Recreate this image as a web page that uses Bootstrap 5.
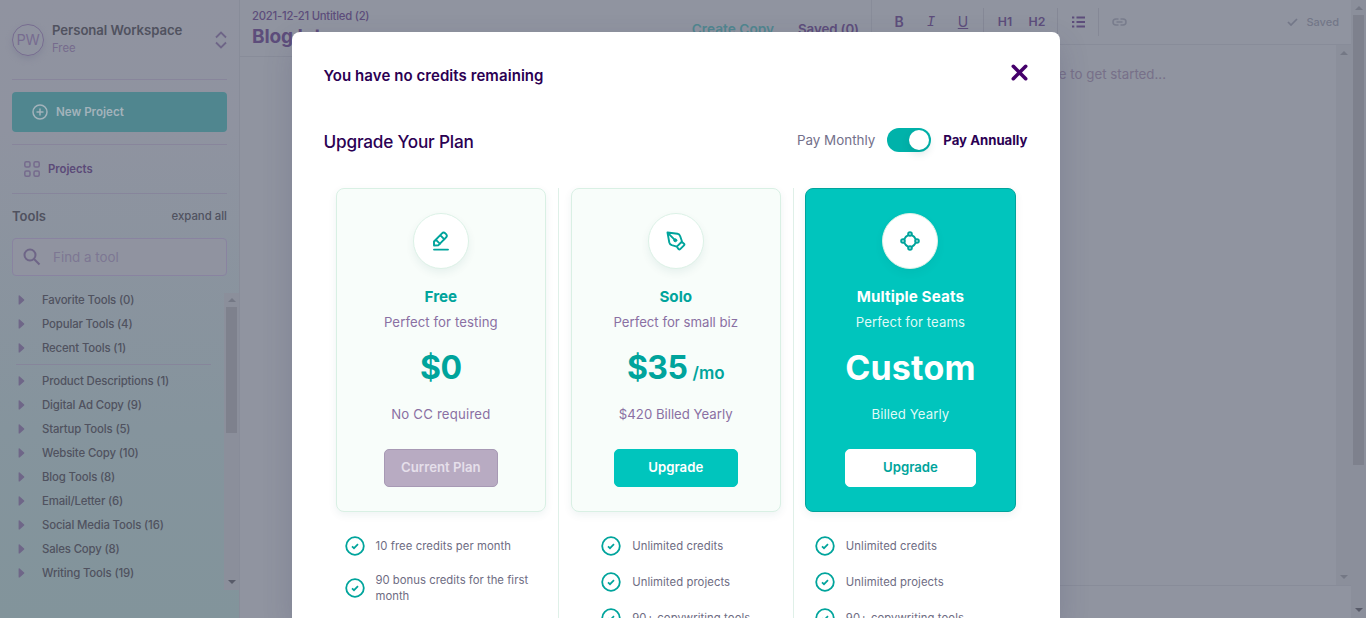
<!DOCTYPE html>
<html lang="en">
<head>
<meta charset="utf-8">
<title>Upgrade Your Plan</title>
<link href="https://cdn.jsdelivr.net/npm/bootstrap@5.3.0/dist/css/bootstrap.min.css" rel="stylesheet">
<style>
body{font-family:Inter,"Liberation Sans",sans-serif;font-size:13.2px;line-height:20px;height:618px;overflow:hidden;background:#9094a0;color:#5d4d7b}
svg{fill:none;stroke:currentColor;flex:none;display:block}
.app{height:618px}
/* sidebar */
.side{width:240px;border-right:1px solid #888c99;background:linear-gradient(#9093a0 0,#8f93a0 130px,#85949d 430px,#82949b 618px);color:#50525f}
.side-pad{padding:0 12px}
.rule{height:1px;background:#85809a;opacity:.75}
.workspace{height:79px}
.avatar{width:32px;height:32px;border:1px solid #776c90;border-radius:50%;font-size:14.5px;color:#776c90;box-shadow:0 3px 6px #858899;letter-spacing:-.2px}
.ws-name{font-size:13.2px;font-weight:600;line-height:18px;letter-spacing:-.07px;margin-top:-1px}
.tiny{font-size:11.3px}
.btn-new{height:40px;background:#50868f;color:#a3b3bb;border-radius:4px;font-weight:600;margin:12px 0;padding-left:20px}
.projects{height:48px;padding-left:12px;color:#5b4a78;font-weight:600}
.search{height:38px;border:1px solid #8983a0;border-radius:4px;background:#9093a0;color:#7d7793;font-size:13.4px}
.tool-list{height:297px}
.tool{height:24px;padding-left:18px;gap:17px;font-size:11.4px;letter-spacing:-.15px;font-weight:450}
.track{width:15px;background:#8b8f9b;color:#777b88}
.thumb{width:11px;background:#7e818d}
.arrow-up{border:4px solid transparent;border-top:0;border-bottom-color:#747885;width:8px}
.arrow-down{border:4px solid transparent;border-bottom:0;border-top-color:#747885;width:8px}
.dark-arrow{border-top-color:#585b69}
/* editor */
.doc-head{width:632px;height:57px;border-right:1px solid #888c99;border-bottom:1px solid #888c99;padding:6px 12px 0}
.doc-title{font-size:19px;font-weight:700;line-height:22px;letter-spacing:-.1px}
.tools-bar{height:45px;border-bottom:1px solid #888c99}
.fmt{width:32px;font-size:14px;font-weight:600;line-height:20px}
.sep{width:1px;height:28px;background:#858896}
.blank-note{padding:19px 170px 0 0;color:#777089;font-size:13.3px}
.foot{height:33px;border-top:1px solid #888c99}
/* dialog */
.upsell{position:absolute;left:292px;top:32px;width:768px;height:586px;overflow:hidden;background:#fff;border-radius:8px 8px 0 0;padding:0 32.500px 0 31.500px;box-shadow:0 12px 30px rgba(60,60,100,.2);color:#2b0053}
.upsell-head{height:86px}
.upsell-head h1{font-size:15px;font-weight:600;letter-spacing:.07px;margin:2px 0 0}
.bill-row{height:44px}
.bill-row h2{font-size:17.2px;font-weight:500;letter-spacing:-.2px;margin:0}
.switch-pill{width:44px;height:24px;border-radius:12px;background:#00b2aa;padding:2px}
.knob{width:20px;height:20px;border-radius:50%;background:#fff;box-shadow:0 4px 8px rgba(0,80,80,.15)}
.plans{margin-top:26px;display:grid;grid-template-columns:repeat(3,1fr)}
.plan-col{height:430px;padding:0 12px}
.plan-col + .plan-col{border-left:1px solid #dff0e8}
.plan{height:324px;border:1px solid #d9f0e4;border-radius:8px;background:#f8fdfa;padding-top:24px;color:#8a70a3;box-shadow:0 3px 8px rgba(0,80,80,.07);letter-spacing:.08px}
.plan-col + .plan-col .plan{margin-left:-.5px}
.disc{width:56px;height:56px;border-radius:50%;border:1px solid #dcf1e6;background:#fff;color:#00a49c;box-shadow:0 4px 8px rgba(0,80,80,.07)}
.plan-name{font-size:15.2px;font-weight:700;line-height:24px;margin-top:16px;color:#00a49c;letter-spacing:0}
.plan-sub{margin-top:3px}
.price{font-size:32px;font-weight:700;line-height:40px;height:40px;margin-top:16px;color:#00a49c;letter-spacing:-.5px}
.price span{font-size:17px;letter-spacing:0;margin-left:5px;font-weight:600}
.billed{margin-top:16px}
.plan-btn{height:38px;margin-top:25px;border-radius:5px;border:1px solid #00c5bd;background:#00c5bd;color:#fff;font-weight:600;font-size:13.2px;padding:0}
.plan-btn.current{background:#b8abc2;border-color:#a799b4;color:#e5dfea;width:114px}
.plan.hot{background:#00c5bd;border-color:#00a49c;color:#dffaf7}
.hot .plan-name,.hot .price{color:#fff}
.hot .plan-btn{background:#fff;border-color:#fff;color:#00a49c}
.perks{margin-top:24px;gap:16px;color:#6e6c83;font-size:11.3px;line-height:16px;letter-spacing:.08px}
.perk{min-height:20px;gap:11px}
.perk svg{color:#00a49c}
</style>
</head>
<body>
<svg width="0" height="0" class="position-absolute">
  <symbol id="tick" viewBox="0 0 20 20"><circle cx="10" cy="10" r="8.8" stroke-width="1.8"/><path d="M7 10.3l2 1.9 4-4.1" stroke-width="1.7"/></symbol>
  <symbol id="caret" viewBox="0 0 7 10"><path d="M1.200 1v8L5.700 5z" fill="currentColor" stroke-width="1.2" stroke-linejoin="round"/></symbol>
</svg>
<div class="app d-flex">
  <aside class="side d-flex flex-column flex-shrink-0">
    <div class="side-pad">
      <div class="workspace d-flex align-items-center">
        <div class="avatar d-flex align-items-center justify-content-center">PW</div>
        <div class="ms-2 flex-grow-1"><div class="ws-name">Personal Workspace</div><div class="tiny" style="color:#766b8d;line-height:19px">Free</div></div>
        <svg width="12" height="18" viewBox="0 0 12 18" stroke-width="1.8" style="color:#6e6587"><path d="M1 6.5l5-5 5 5M1 11.500l5 5 5-5"/></svg>
      </div>
      <div class="rule"></div>
      <div class="btn-new d-flex align-items-center gap-2 tiny"><svg width="16" height="16" viewBox="0 0 16 16" stroke-width="1.5"><circle cx="8" cy="8" r="7"/><path d="M8 4.500v7M4.500 8h7"/></svg><span style="font-size:11.6px">New Project</span></div>
      <div class="rule"></div>
      <div class="projects d-flex align-items-center gap-2 tiny"><svg width="16" height="16" viewBox="0 0 16 16" stroke-width="1.5" style="color:#766b8d"><rect x=".8" y=".8" width="5.200" height="5.200" rx="1.500"/><rect x="10" y=".8" width="5.200" height="5.200" rx="1.500"/><rect x=".8" y="10" width="5.200" height="5.200" rx="1.500"/><rect x="10" y="10" width="5.200" height="5.200" rx="1.500"/></svg>Projects</div>
      <div class="rule"></div>
      <div class="d-flex align-items-center justify-content-between" style="height:44px"><span style="font-weight:600;font-size:13px">Tools</span><span style="font-size:11.4px;font-weight:500">expand all</span></div>
      <div class="search d-flex align-items-center"><svg class="ms-2" width="22" height="22" viewBox="0 0 22 22" stroke-width="2" style="color:#6e6587"><circle cx="9" cy="9" r="5.500"/><path d="M13 13l5.500 5.500"/></svg><span style="margin-left:10px">Find a tool</span></div>
    </div>
    <div class="tool-list d-flex" style="margin-top:17px">
      <div class="flex-grow-1" id="tools" style="margin-top:-5px"></div>
      <div class="track d-flex flex-column align-items-center"><div class="arrow-up" style="margin:5px 0"></div><div class="thumb" style="height:126px"></div><div class="arrow-down dark-arrow mt-auto" style="margin-bottom:6px"></div></div>
    </div>
  </aside>
  <main class="flex-grow-1 d-flex">
    <div class="doc-head flex-shrink-0">
      <div style="font-size:11.300px;font-weight:500;letter-spacing:-.24px">2021-12-21 Untitled (2)</div>
      <div class="d-flex">
        <div class="doc-title">Blog Intro</div>
        <div class="ms-auto d-flex fw-semibold" style="gap:24px;line-height:7px"><span style="color:#50868f;font-size:13.700px">Create Copy</span><span style="font-size:13.300px;letter-spacing:-.1px">Saved (0)</span></div>
      </div>
    </div>
    <div class="flex-grow-1 d-flex flex-column">
      <div class="tools-bar d-flex align-items-center" style="padding:0 12px 0 11px">
        <span class="fmt text-center">B</span><span class="fmt text-center fst-italic font-monospace fw-normal">I</span><span class="fmt text-center text-decoration-underline fw-normal">U</span>
        <span class="sep ms-1"></span>
        <span class="fmt text-center" style="font-size:12.300px;margin-left:5px">H1</span><span class="fmt text-center" style="font-size:12.300px">H2</span>
        <span class="sep ms-1"></span>
        <svg style="margin:0 13px 0 14px" width="13" height="12" viewBox="0 0 13 12" stroke-width="2"><path d="M4.500 1.500H13M4.500 6H13M4.500 10.500H13M0 1.500h2.300M0 6h2.300M0 10.500h2.300"/></svg>
        <span class="sep"></span>
        <svg style="color:#787c8c;margin-left:13px" width="15" height="8" viewBox="0 0 15 8" stroke-width="1.500"><path d="M6.500 1H4a3 3 0 000 6h2.500M8.500 1H11a3 3 0 010 6H8.500M4.500 4h6"/></svg>
        <span class="ms-auto d-flex align-items-center" style="color:#737788;gap:8px;font-size:11px;font-weight:500"><svg width="11" height="8" viewBox="0 0 11 8" stroke-width="1.700"><path d="M1 4l3 3 6-6"/></svg>Saved</span>
      </div>
      <div class="flex-grow-1 d-flex">
        <div class="flex-grow-1 blank-note text-end">Write your own copy here to get started...</div>
        <div class="track d-flex flex-column align-items-center justify-content-between" style="padding:6px 0"><div class="arrow-up"></div><div class="arrow-down"></div></div>
      </div>
      <div class="foot"></div>
    </div>
    <div class="track d-flex flex-column align-items-center flex-shrink-0"><div class="arrow-up" style="margin:6px 0 5px"></div><div class="thumb" style="height:450px"></div><div class="arrow-down dark-arrow mt-auto" style="margin-bottom:6px"></div></div>
  </main>
</div>

<div class="upsell">
  <div class="upsell-head d-flex align-items-center justify-content-between"><h1>You have no credits remaining</h1><svg width="17" height="17" viewBox="0 0 17 17" stroke-width="3.600" stroke-linecap="round" style="color:#45006b;margin-top:-5px"><path d="M2.300 2.300l12.400 12.400M14.700 2.300L2.300 14.700"/></svg></div>
  <div class="bill-row d-flex align-items-center"><h2 style="padding-top:4px">Upgrade Your Plan</h2>
    <div class="ms-auto d-flex align-items-center" style="gap:12px"><span style="color:#73708a;font-size:13.400px">Pay Monthly</span><div class="switch-pill d-flex justify-content-end"><div class="knob"></div></div><span style="font-weight:700;font-size:13.200px">Pay Annually</span></div>
  </div>
  <div class="plans">
    <div class="plan-col">
      <div class="plan d-flex flex-column align-items-center">
        <div class="disc d-flex align-items-center justify-content-center"><svg width="20" height="20" viewBox="0 0 20 20" stroke-width="1.900" stroke-linejoin="round" stroke-linecap="round"><path d="M3 14.500V10.500L11 2.300q1.500-1.500 3.200 0l.9.900q1.500 1.600 0 3.200L7.500 14.200zM4.800 8.700l4.200 4.200M9.200 4.200l4.200 4.200M3 18.600h14"/></svg></div>
        <div class="plan-name">Free</div><div class="plan-sub">Perfect for testing</div><div class="price">$0</div><div class="billed" style="letter-spacing:.2px">No CC required</div>
        <button class="btn plan-btn current">Current Plan</button>
      </div>
      <div class="perks d-flex flex-column" style="padding-left:9px">
        <div class="perk d-flex align-items-center"><svg width="20" height="20"><use href="#tick"/></svg>10 free credits per month</div>
        <div class="perk d-flex align-items-center"><svg width="20" height="20"><use href="#tick"/></svg><span style="letter-spacing:.02px">90 bonus credits for the first<br>month</span></div>
      </div>
    </div>
    <div class="plan-col">
      <div class="plan d-flex flex-column align-items-center">
        <div class="disc d-flex align-items-center justify-content-center"><svg width="20" height="20" viewBox="0 0 20 20" stroke-width="1.900" stroke-linejoin="round" stroke-linecap="round"><path d="M1.500 1.500l10 1.300q2 .4 2.700 2.400l1.800 5.300-5.200 5.200-5-1.500q-2-.7-2.500-2.700zM1.800 1.800l6.500 6.500M16 11l2 1.700q.8.800 0 1.600l-3.800 3.800q-.8.800-1.600 0L11 16"/><circle cx="9.300" cy="9.300" r="1.500" fill="currentColor" stroke-width="1"/></svg></div>
        <div class="plan-name">Solo</div><div class="plan-sub" style="letter-spacing:0">Perfect for small biz</div><div class="price">$35<span>/mo</span></div><div class="billed" style="letter-spacing:0">$420 Billed Yearly</div>
        <button class="btn plan-btn" style="width:124px">Upgrade</button>
      </div>
      <div class="perks d-flex flex-column" style="padding-left:30px">
        <div class="perk d-flex align-items-center"><svg width="20" height="20"><use href="#tick"/></svg>Unlimited credits</div>
        <div class="perk d-flex align-items-center"><svg width="20" height="20"><use href="#tick"/></svg>Unlimited projects</div>
        <div class="perk d-flex align-items-center"><svg width="20" height="20"><use href="#tick"/></svg>90+ copywriting tools</div>
      </div>
    </div>
    <div class="plan-col">
      <div class="plan hot d-flex flex-column align-items-center">
        <div class="disc d-flex align-items-center justify-content-center"><svg width="20" height="20" viewBox="0 0 20 20" stroke-width="2"><circle cx="10" cy="3" r="1.800"/><circle cx="10" cy="17" r="1.800"/><circle cx="3" cy="10" r="1.800"/><circle cx="17" cy="10" r="1.800"/><path d="M8.300 4.200Q5.500 5.500 4.200 8.300M11.700 4.200Q14.500 5.500 15.800 8.300M8.300 15.800Q5.500 14.500 4.200 11.700M11.700 15.800Q14.500 14.500 15.800 11.700"/></svg></div>
        <div class="plan-name" style="letter-spacing:.1px">Multiple Seats</div><div class="plan-sub">Perfect for teams</div><div class="price" style="font-size:34px;letter-spacing:.2px">Custom</div><div class="billed">Billed Yearly</div>
        <button class="btn plan-btn" style="width:131px">Upgrade</button>
      </div>
      <div class="perks d-flex flex-column" style="padding-left:9px">
        <div class="perk d-flex align-items-center"><svg width="20" height="20"><use href="#tick"/></svg>Unlimited credits</div>
        <div class="perk d-flex align-items-center"><svg width="20" height="20"><use href="#tick"/></svg>Unlimited projects</div>
        <div class="perk d-flex align-items-center"><svg width="20" height="20"><use href="#tick"/></svg>90+ copywriting tools</div>
      </div>
    </div>
  </div>
</div>
<script src="https://cdn.jsdelivr.net/npm/bootstrap@5.3.0/dist/js/bootstrap.bundle.min.js"></script>
<script>
const groups = ['Favorite Tools (0)','Popular Tools (4)','Recent Tools (1)',null,'Product Descriptions (1)','Digital Ad Copy (9)','Startup Tools (5)','Website Copy (10)','Blog Tools (8)','Email/Letter (6)','Social Media Tools (16)','Sales Copy (8)','Writing Tools (19)'];
document.getElementById('tools').innerHTML = groups.map(g => g
  ? `<div class="tool d-flex align-items-center"><svg width="7" height="10" style="color:#6f6688"><use href="#caret"/></svg>${g}</div>`
  : '<div class="rule" style="margin:4px 13px 4px 16px"></div>').join('');
</script>
</body>
</html>
